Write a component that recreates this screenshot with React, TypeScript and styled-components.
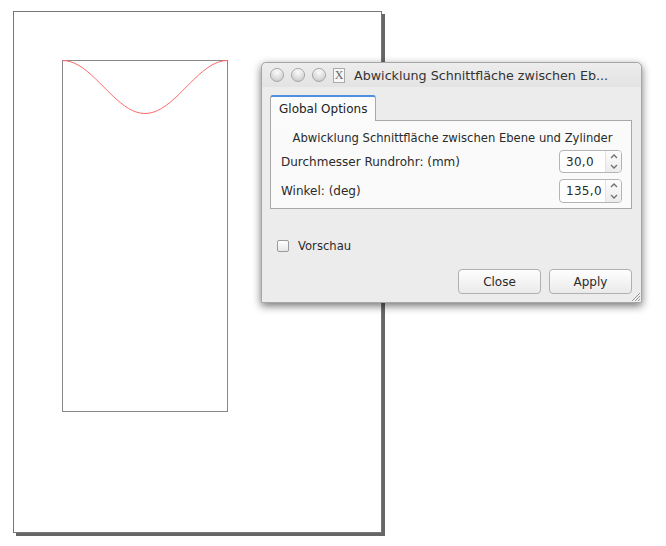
import React from 'react'
import styled, { createGlobalStyle } from 'styled-components'

const GlobalStyle = createGlobalStyle`
  body {
    margin: 0;
    background: #ffffff;
    font-family: "DejaVu Sans", "Liberation Sans", sans-serif;
  }
`

const Stage = styled.div`
  position: relative;
  width: 666px;
  height: 546px;
  overflow: hidden;
  background: #fff;
  padding: 11px 0 0 13px;
  box-sizing: border-box;
`

// the document page on the canvas
const Page = styled.div`
  width: 369px;
  height: 522px;
  border: 1px solid #777;
  background: #fff;
  box-shadow: 3px 3px 0 #666;
  padding: 48px 0 0 48px;
  box-sizing: border-box;
`

const Window = styled.div`
  position: absolute;
  left: 261px;
  top: 62px;
  width: 381px;
  height: 241px;
  background: #ececec;
  border: 1px solid #a6a6a6;
  border-radius: 5px 5px 0 0;
  box-shadow: 0 3px 8px rgba(0, 0, 0, 0.55);
  box-sizing: border-box;
  display: flex;
  flex-direction: column;
  color: #2a2a2a;
  font-size: 12px;
`

const TitleBar = styled.div`
  height: 24px;
  display: flex;
  align-items: center;
  padding: 0 0 0 8px;
  gap: 7px;
  background: linear-gradient(#ededed, #e3e3e3);
  border-radius: 5px 5px 0 0;
`

const Light = styled.span`
  width: 12px;
  height: 12px;
  border-radius: 50%;
  border: 1px solid #a4a4a4;
  background: radial-gradient(circle at 50% 30%, #fafafa 0%, #dcdcdc 55%, #c4c4c4 100%);
  box-shadow: inset 0 1px 1px rgba(255, 255, 255, 0.8);
`

const XIcon = styled.span`
  width: 10px;
  height: 13px;
  border: 1px solid #aaa;
  background: #f7f7f7;
  font-family: "Liberation Serif", serif;
  font-size: 12px;
  line-height: 13px;
  text-align: center;
  color: #666;
`

const Title = styled.span`
  font-size: 12.7px;
  color: #333;
  white-space: nowrap;
  margin-left: 2px;
`

const Body = styled.div`
  flex: 1;
  display: flex;
  flex-direction: column;
  padding: 8px 9px 8px 8px;
`

const Tab = styled.div`
  align-self: flex-start;
  height: 26px;
  padding: 0 8px;
  display: flex;
  align-items: center;
  background: #fbfbfb;
  border: 1px solid #a8a8a8;
  border-top: 2px solid #4f8fe0;
  border-bottom: none;
  border-radius: 3px 3px 0 0;
  box-sizing: border-box;
  font-size: 12px;
  color: #222;
  position: relative;
  z-index: 1;
  margin-bottom: -1px;
`

const Panel = styled.div`
  height: 89px;
  background: #fafafa;
  border: 1px solid #a8a8a8;
  box-sizing: border-box;
  padding: 8px 9px 0 10px;
  display: flex;
  flex-direction: column;
`

const Heading = styled.div`
  text-align: center;
  font-size: 11.6px;
  height: 18px;
  line-height: 18px;
  padding-left: 2px;
`

const Row = styled.div<{ $gap: number }>`
  display: flex;
  align-items: center;
  justify-content: space-between;
  height: 25px;
  margin-top: ${p => p.$gap}px;
`

const Label = styled.span`
  font-size: 12px;
`

const Spinner = styled.div<{ $h: number }>`
  width: 63px;
  height: ${p => p.$h}px;
  display: flex;
  border: 1px solid #b4b4b4;
  border-radius: 4px;
  background: #fff;
  box-sizing: border-box;
  overflow: hidden;
`

const SpinValue = styled.span`
  flex: 1;
  display: flex;
  align-items: center;
  padding-left: 6px;
  font-size: 12px;
  letter-spacing: 0.3px;
`

const SpinArrows = styled.div`
  width: 15px;
  display: flex;
  flex-direction: column;
  border-left: 1px solid #e2e2e2;
  background: linear-gradient(#fdfdfd, #ececec);
  align-items: center;
  justify-content: space-around;
`

const Chevron = ({ up }: { up?: boolean }) => (
  <svg width="8" height="5" viewBox="0 0 8 5">
    <path
      d={up ? 'M1 4 L4 1 L7 4' : 'M1 1 L4 4 L7 1'}
      fill="none"
      stroke="#6f6f6f"
      strokeWidth="1.3"
    />
  </svg>
)

const CheckRow = styled.div`
  display: flex;
  align-items: center;
  gap: 9px;
  margin: 30px 0 0 7px;
`

const Box = styled.span`
  width: 10px;
  height: 10px;
  border: 1px solid #9a9a9a;
  border-radius: 2px;
  background: linear-gradient(#ffffff, #e6e6e6);
`

const CheckLabel = styled.span`
  font-size: 11.6px;
`

const Footer = styled.div`
  margin-top: auto;
  display: flex;
  justify-content: flex-end;
  gap: 8px;
`

const Button = styled.button`
  width: 83px;
  height: 25px;
  border: 1px solid #b0b0b0;
  border-radius: 4px;
  background: linear-gradient(#fefefe, #eaeaea);
  font-family: inherit;
  font-size: 12px;
  color: #2a2a2a;
  padding: 0;
`

const Grip = styled.svg`
  position: absolute;
  right: 0;
  bottom: 0;
`

const points = Array.from({ length: 41 }, (_, i) => {
  const t = i / 40
  const x = 0.5 + t * 165
  const y = 0.5 + 53 * (1 - Math.cos(2 * Math.PI * t)) / 2
  return `${x.toFixed(2)},${y.toFixed(2)}`
}).join(' ')

export default function App() {
  return (
    <Stage>
      <GlobalStyle />
      <Page>
        <svg width="168" height="353" viewBox="0 0 168 353">
          <rect x="0.5" y="0.5" width="165" height="351" fill="none" stroke="#888" />
          <polyline points={points} fill="none" stroke="#ff6a6a" strokeWidth="1" />
        </svg>
      </Page>

      <Window>
        <TitleBar>
          <Light />
          <Light />
          <Light />
          <XIcon>X</XIcon>
          <Title>Abwicklung Schnittfläche zwischen Eb...</Title>
        </TitleBar>
        <Body>
          <Tab>Global Options</Tab>
          <Panel>
            <Heading>Abwicklung Schnittfläche zwischen Ebene und Zylinder</Heading>
            <Row $gap={2}>
              <Label>Durchmesser Rundrohr: (mm)</Label>
              <Spinner $h={23}>
                <SpinValue>30,0</SpinValue>
                <SpinArrows>
                  <Chevron up />
                  <Chevron />
                </SpinArrows>
              </Spinner>
            </Row>
            <Row $gap={4}>
              <Label>Winkel: (deg)</Label>
              <Spinner $h={24}>
                <SpinValue>135,0</SpinValue>
                <SpinArrows>
                  <Chevron up />
                  <Chevron />
                </SpinArrows>
              </Spinner>
            </Row>
          </Panel>
          <CheckRow>
            <Box />
            <CheckLabel>Vorschau</CheckLabel>
          </CheckRow>
          <Footer>
            <Button>Close</Button>
            <Button>Apply</Button>
          </Footer>
        </Body>
        <Grip width="12" height="12" viewBox="0 0 12 12">
          <path d="M11 3 L3 11 M11 6 L6 11 M11 9 L9 11" stroke="#999" strokeWidth="1" />
        </Grip>
      </Window>
    </Stage>
  )
}
